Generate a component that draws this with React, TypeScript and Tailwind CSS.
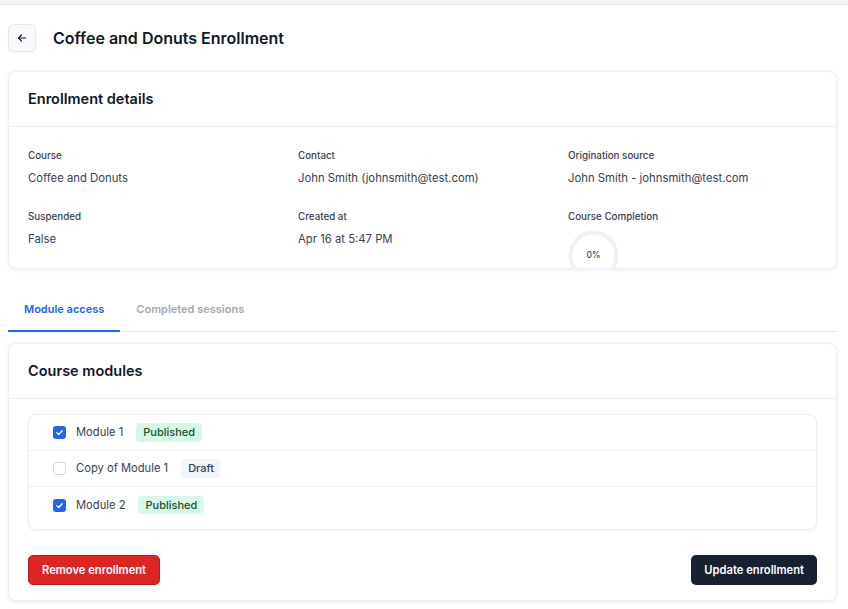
import React from "react";

function Check() {
  return (
    <svg width="9" height="9" viewBox="0 0 12 12" fill="none">
      <path d="M2.5 6.3 L5 8.6 L9.6 3.6" stroke="white" strokeWidth="1.8" strokeLinecap="round" strokeLinejoin="round" />
    </svg>
  );
}

function Checkbox({ checked }: { checked: boolean }) {
  return checked ? (
    <span className="flex h-[13px] w-[13px] items-center justify-center rounded-[3px] bg-[#2563eb]">
      <Check />
    </span>
  ) : (
    <span className="h-[13px] w-[13px] rounded-[3px] border border-[#d1d5db] bg-white" />
  );
}

function Field({ label, value }: { label: string; value: string }) {
  return (
    <div className="flex flex-col">
      <div className="text-[9.8px] font-medium leading-4 text-[#374151]">{label}</div>
      <div className="mt-[6px] text-[11.3px] leading-4 text-[#374151]">{value}</div>
    </div>
  );
}

export default function App() {
  const modules = [
    { name: "Module 1", status: "Published", checked: true },
    { name: "Copy of Module 1", status: "Draft", checked: false },
    { name: "Module 2", status: "Published", checked: true },
  ];
  return (
    <div
      className="min-h-[609px] w-[848px] bg-white"
      style={{ fontFamily: "Inter, 'Noto Sans', sans-serif" }}
    >
      <div className="h-[5px] border-b border-[#e5e7eb] bg-[#f3f4f6]" />
      <div className="pl-[8px] pr-[11px]">
        <div className="flex items-center gap-[17px] pt-[19px]">
          <button className="flex h-[28px] w-[28px] items-center justify-center rounded-[6px] border border-[#e5e7eb] bg-[#f9fafb] shadow-[0_1px_2px_rgba(0,0,0,0.05)]">
            <svg width="12" height="12" viewBox="0 0 24 24" fill="none" stroke="#111827" strokeWidth="2.2" strokeLinecap="round" strokeLinejoin="round">
              <path d="M19 12H5" />
              <path d="M11 6l-6 6 6 6" />
            </svg>
          </button>
          <h1 className="text-[16px] font-semibold text-[#111827]">Coffee and Donuts Enrollment</h1>
        </div>

        <div className="mt-[19px] overflow-hidden rounded-[8px] border border-[#eef0f3] bg-white shadow-[0_1px_4px_rgba(0,0,0,0.08)]">
          <div className="flex h-[55px] items-center border-b border-[#e9ebee] px-[19px]">
            <h2 className="text-[14.5px] font-semibold text-[#111827]">Enrollment details</h2>
          </div>
          <div className="h-[141px] overflow-hidden px-[19px] pt-[21px]">
            <div className="grid grid-cols-[270px_270px_1fr] gap-y-[23px]">
              <Field label="Course" value="Coffee and Donuts" />
              <Field label="Contact" value="John Smith (johnsmith@test.com)" />
              <Field label="Origination source" value="John Smith - johnsmith@test.com" />
              <Field label="Suspended" value="False" />
              <Field label="Created at" value="Apr 16 at 5:47 PM" />
              <div className="flex flex-col">
                <div className="text-[9.8px] font-medium leading-4 text-[#374151]">Course Completion</div>
                <div className="relative mt-[5px] h-[51px] w-[51px]">
                  <svg width="51" height="51" viewBox="0 0 51 51">
                    <circle cx="25.5" cy="25.5" r="23" fill="none" stroke="#eef2f7" strokeWidth="4" />
                  </svg>
                  <span className="absolute inset-0 flex items-center justify-center text-[8.5px] font-medium text-[#374151]">0%</span>
                </div>
              </div>
            </div>
          </div>
        </div>

        <div className="mt-[21px] flex border-b border-[#e5e7eb]">
          <div className="-mb-px border-b-2 border-[#2563eb] px-[16px] pb-[13px] pt-[11px] text-[11px] font-semibold leading-4 text-[#2563eb]">
            Module access
          </div>
          <div className="px-[16px] pb-[13px] pt-[11px] text-[11px] font-semibold leading-4 text-[#a3a8b0]">
            Completed sessions
          </div>
        </div>

        <div className="mt-[11px] rounded-[8px] border border-[#eef0f3] bg-white shadow-[0_1px_4px_rgba(0,0,0,0.08)]">
          <div className="flex h-[55px] items-center border-b border-[#e9ebee] px-[19px]">
            <h2 className="text-[14.5px] font-semibold text-[#111827]">Course modules</h2>
          </div>
          <div className="px-[19px] pb-[15px] pt-[15px]">
            <div className="rounded-[8px] border border-[#eceef1] pb-[6px] shadow-[0_1px_3px_rgba(0,0,0,0.06)]">
              {modules.map((m, i) => (
                <div
                  key={m.name}
                  className={`flex h-[36px] items-center pl-[24px] ${i < modules.length - 1 ? "border-b border-[#eceef1]" : ""}`}
                >
                  <Checkbox checked={m.checked} />
                  <span className="ml-[10px] text-[11.2px] text-[#374151]">{m.name}</span>
                  <span
                    className={
                      m.status === "Published"
                        ? "ml-[13px] rounded-[4px] bg-[#d7f8e8] px-[7px] py-[1px] text-[11px] font-medium text-[#14532d]"
                        : "ml-[13px] rounded-[4px] bg-[#f1f5f9] px-[7px] py-[1px] text-[11px] font-medium text-[#334155]"
                    }
                  >
                    {m.status}
                  </span>
                </div>
              ))}
            </div>
            <div className="mt-[25px] flex items-center justify-between">
              <button className="h-[30px] rounded-[5px] border border-[#b91c1c] bg-[#dc2626] px-[13px] text-[11.2px] font-semibold text-white">
                Remove enrollment
              </button>
              <button className="h-[30px] rounded-[5px] bg-[#172131] px-[13px] text-[11.2px] font-semibold text-white">
                Update enrollment
              </button>
            </div>
          </div>
        </div>
      </div>
    </div>
  );
}
